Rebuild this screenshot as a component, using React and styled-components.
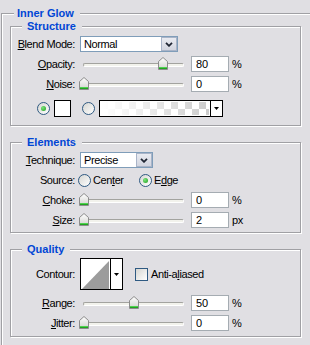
import React from "react"
import styled, { createGlobalStyle } from "styled-components"

const GlobalStyle = createGlobalStyle`
  html, body {
    margin: 0;
    padding: 0;
    background: #e0dfe3;
  }
  body {
    font-family: "Liberation Sans", Arial, sans-serif;
    font-size: 11px;
    color: #000;
  }
`

const thumbDefs = (
  <defs>
    <linearGradient id="thumbFill" x1="0" y1="0" x2="0" y2="1">
      <stop offset="0" stopColor="#ffffff" />
      <stop offset="1" stopColor="#d2d2ce" />
    </linearGradient>
  </defs>
)

const ThumbIcon = () => (
  <svg width="10" height="13" viewBox="0 0 10 13">
    {thumbDefs}
    <path d="M5 0.5 L9.5 4.5 V12.5 H0.5 V4.5 Z" fill="url(#thumbFill)" stroke="#8c8c8c" />
    <rect x="1" y="10" width="8" height="1" fill="#4fd04f" />
    <rect x="1" y="11" width="8" height="1" fill="#22a322" />
  </svg>
)

const Chevron = () => (
  <svg width="8" height="5" viewBox="0 0 8 5">
    <polyline points="1,0.8 4,3.8 7,0.8" fill="none" stroke="#1f2533" strokeWidth="1.8" />
  </svg>
)

const DownArrow = () => (
  <svg width="5" height="3" viewBox="0 0 5 3">
    <polygon points="0,0 5,0 2.5,3" fill="#000" />
  </svg>
)

const Slider = ({ value }) => (
  <SliderBox>
    <Track />
    <Thumb style={{ left: Math.round(-1 + (value / 100) * 99) }}>
      <ThumbIcon />
    </Thumb>
  </SliderBox>
)

const SliderRow = ({ label, accessKey, rest, value, text, unit }) => (
  <Row>
    <Label>
      <u>{accessKey}</u>
      {rest}:
    </Label>
    <Slider value={value} />
    <TextBox defaultValue={text ?? value} readOnly />
    <Unit>{unit}</Unit>
  </Row>
)

const App = () => (
  <Dialog>
    <GlobalStyle />
    <Group $outer>
      <Legend $offset={12} $padLeft={3}>Inner Glow</Legend>

      <Group $pad="3px 0 8px 0">
        <Legend $offset={11} $padLeft={5}>Structure</Legend>
        <Stack>
          <Row>
            <Label>
              <u>B</u>lend Mode:
            </Label>
            <Combo $w={98}>
              <ComboText>Normal</ComboText>
              <ComboButton>
                <Chevron />
              </ComboButton>
            </Combo>
          </Row>
          <SliderRow accessKey="O" rest="pacity" value={80} unit="%" />
          <SliderRow accessKey="N" rest="oise" value={0} unit="%" />
          <ColorRow>
            <Radio $checked />
            <Swatch />
            <Radio />
            <GradientPicker>
              <GradientPreview />
              <ArrowArea>
                <DownArrow />
              </ArrowArea>
            </GradientPicker>
          </ColorRow>
        </Stack>
      </Group>

      <Group $mt={10} $pad="3px 0 4px 0">
        <Legend $offset={11} $padLeft={5}>Elements</Legend>
        <Stack>
          <Row>
            <Label>
              <u>T</u>echnique:
            </Label>
            <Combo $w={73}>
              <ComboText>Precise</ComboText>
              <ComboButton>
                <Chevron />
              </ComboButton>
            </Combo>
          </Row>
          <Row>
            <Label>Source:</Label>
            <RadioGroup>
              <RadioOption $w={61}>
                <Radio />
                <span>
                  Cen<u>t</u>er
                </span>
              </RadioOption>
              <RadioOption>
                <Radio $checked />
                <span>
                  E<u>d</u>ge
                </span>
              </RadioOption>
            </RadioGroup>
          </Row>
          <SliderRow accessKey="C" rest="hoke" value={0} unit="%" />
          <SliderRow accessKey="S" rest="ize" value={0} text="2" unit="px" />
        </Stack>
      </Group>

      <Group $mt={10} $pad="2px 0 5px 0">
        <Legend $offset={11} $padLeft={5}>Quality</Legend>
        <Stack>
          <Row $h={32} $gapAfter={1}>
            <Label>Contour:</Label>
            <Contour>
              <ContourPreview>
                <svg width="27" height="28" viewBox="0 0 27 28" preserveAspectRatio="none">
                  <polygon points="0,28 27,0 27,28" fill="#9c9c9c" />
                </svg>
              </ContourPreview>
              <ArrowArea>
                <DownArrow />
              </ArrowArea>
            </Contour>
            <CheckLabel>
              <Checkbox />
              <span>
                Anti-a<u>l</u>iased
              </span>
            </CheckLabel>
          </Row>
          <SliderRow accessKey="R" rest="ange" value={50} unit="%" />
          <SliderRow accessKey="J" rest="itter" value={0} unit="%" />
        </Stack>
      </Group>
    </Group>
  </Dialog>
)

export default App

const Dialog = styled.div`
  width: 310px;
  height: 345px;
  overflow: hidden;
  background: #e0dfe3;
`

const Group = styled.fieldset`
  box-sizing: border-box;
  min-width: 0;
  margin: ${p => (p.$outer ? "7px 0 0 1px" : `${p.$mt || 0}px 0 0 8px`)};
  padding: ${p => (p.$outer ? "0 0 30px 0" : p.$pad)};
  width: ${p => (p.$outer ? "330px" : "291px")};
  border: 1px solid #a0a0a4;
  box-shadow: inset 1px 1px 0 #fff, 1px 1px 0 #fff;
`

const Legend = styled.legend`
  margin-left: ${p => p.$offset}px;
  padding: 0 6px 0 ${p => p.$padLeft}px;
  font-weight: bold;
  font-size: 11px;
  line-height: 13px;
  color: #0046d5;
  background: #e0dfe3;
`

const Stack = styled.div`
  display: flex;
  flex-direction: column;
  gap: 4px;
  letter-spacing: -0.4px;
`

const Row = styled.div`
  display: flex;
  align-items: center;
  height: ${p => p.$h || 16}px;
  margin-bottom: ${p => p.$gapAfter || 0}px;
  line-height: 13px;
  white-space: nowrap;
`

const ColorRow = styled(Row)`
  height: 17px;
  margin-top: 4px;
  padding-left: 26px;
`

const Label = styled.span`
  flex: none;
  width: 64px;
  margin-right: 5px;
  text-align: right;
`

const Combo = styled.div`
  display: flex;
  flex: none;
  width: ${p => p.$w}px;
  height: 16px;
  box-sizing: border-box;
  border: 1px solid #7f9db9;
  background: #fff;
`

const ComboText = styled.span`
  flex: 1;
  padding-left: 3px;
  line-height: 14px;
`

const ComboButton = styled.span`
  display: flex;
  align-items: center;
  justify-content: center;
  width: 16px;
  box-sizing: border-box;
  border: 1px solid #a9b4c8;
  background: linear-gradient(#e9ebf1, #d2d5df);
`

const SliderBox = styled.div`
  position: relative;
  flex: none;
  width: 111px;
  height: 16px;
  box-sizing: border-box;
  padding: 7px 7px 0 3px;
`

const Track = styled.div`
  height: 2px;
  border-top: 1px solid #a3a39f;
  border-left: 1px solid #a3a39f;
  border-bottom: 1px solid #ffffff;
  border-right: 1px solid #ffffff;
  border-radius: 2px;
  background: #f2f2ec;
`

const Thumb = styled.div`
  position: absolute;
  top: 1px;
  width: 10px;
  height: 13px;
  line-height: 0;
`

const TextBox = styled.input`
  flex: none;
  width: 38px;
  height: 16px;
  box-sizing: border-box;
  margin: 0;
  padding: 0 0 0 4px;
  border: 1px solid #a5acb2;
  background: #fff;
  font: inherit;
  color: #000;
  outline: none;
`

const Unit = styled.span`
  margin-left: 3px;
`

const Radio = styled.span`
  display: flex;
  align-items: center;
  justify-content: center;
  flex: none;
  width: 13px;
  height: 13px;
  box-sizing: border-box;
  border: 1px solid #2f5a82;
  border-radius: 50%;
  background: linear-gradient(135deg, #d6d6d2, #ffffff);
  margin-right: 4px;

  &::after {
    content: "";
    display: ${p => (p.$checked ? "block" : "none")};
    width: 5px;
    height: 5px;
    border-radius: 50%;
    background: radial-gradient(circle at 35% 35%, #7be57b, #1e9c1e);
  }
`

const Swatch = styled.span`
  flex: none;
  width: 17px;
  height: 17px;
  box-sizing: border-box;
  border: 1px solid #000;
  background: #fff;
  margin-right: 11px;
`

const GradientPicker = styled.div`
  display: flex;
  flex: none;
  width: 124px;
  height: 17px;
  box-sizing: border-box;
  border: 1px solid #000;
`

const GradientPreview = styled.div`
  flex: 1;
  border: 1px solid #fff;
  background:
    linear-gradient(to right, #ffffff 0%, rgba(255, 255, 255, 0.6) 45%, rgba(255, 255, 255, 0) 100%),
    repeating-conic-gradient(#ffffff 0% 25%, #cccccc 0% 50%) 0 0 / 14px 14px;
`

const ArrowArea = styled.span`
  display: flex;
  align-items: center;
  justify-content: center;
  width: 11px;
  border-left: 1px solid #000;
  background: #fff;
`

const RadioGroup = styled.div`
  display: flex;
  align-items: center;
  margin-left: -2px;
`

const RadioOption = styled.label`
  display: flex;
  align-items: center;
  width: ${p => (p.$w ? `${p.$w}px` : "auto")};

  & > span:first-child {
    margin-right: 2px;
  }
`

const Contour = styled.div`
  display: flex;
  flex: none;
  width: 43px;
  height: 32px;
  box-sizing: border-box;
  border: 1px solid #000;
  background: #fff;
`

const ContourPreview = styled.div`
  width: 29px;
  box-sizing: border-box;
  padding: 2px 0 0 1px;
  line-height: 0;
`

const CheckLabel = styled.label`
  display: flex;
  align-items: center;
  margin-left: 12px;
  gap: 3px;
`

const Checkbox = styled.span`
  flex: none;
  width: 13px;
  height: 13px;
  box-sizing: border-box;
  border: 1px solid #2f5a82;
  background: linear-gradient(135deg, #d6d6d2, #ffffff);
`
